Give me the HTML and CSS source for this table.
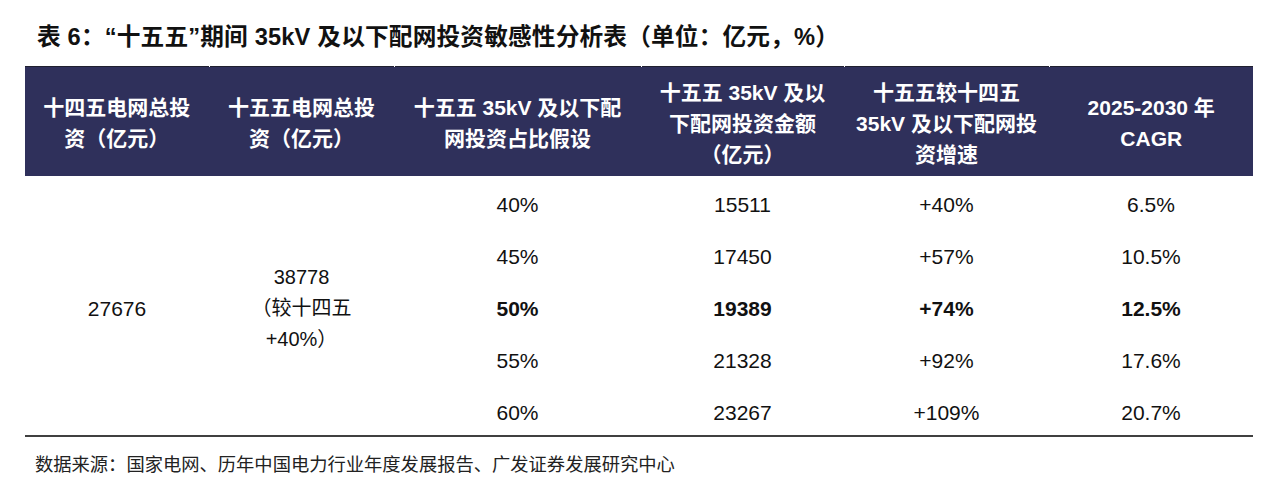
FILE: index.html
```html
<!DOCTYPE html>
<html lang="zh-CN">
<head>
<meta charset="utf-8">
<title>表6</title>
<link rel="stylesheet" href="styles.css">
</head>
<body>
<div class="page">
  <h1 class="title">表 6：“十五五”期间 35kV 及以下配网投资敏感性分析表（单位：亿元，%）</h1>
  <table class="grid">
    <colgroup>
      <col class="c1"><col class="c2"><col class="c3"><col class="c4"><col class="c5"><col class="c6">
    </colgroup>
    <thead>
      <tr>
        <th class="first">十四五电网总投<br>资（亿元）</th>
        <th>十五五电网总投<br>资（亿元）</th>
        <th>十五五 35kV 及以下配<br>网投资占比假设</th>
        <th>十五五 35kV 及以<br>下配网投资金额<br>（亿元）</th>
        <th>十五五较十四五<br>35kV 及以下配网投<br>资增速</th>
        <th>2025-2030 年<br>CAGR</th>
      </tr>
    </thead>
    <tbody>
      <tr>
        <td rowspan="5" class="merged">27676</td>
        <td rowspan="5" class="merged multi">38778<br>（较十四五<br>+40%）</td>
        <td>40%</td><td>15511</td><td>+40%</td><td>6.5%</td>
      </tr>
      <tr><td>45%</td><td>17450</td><td>+57%</td><td>10.5%</td></tr>
      <tr class="strong"><td>50%</td><td>19389</td><td>+74%</td><td>12.5%</td></tr>
      <tr><td>55%</td><td>21328</td><td>+92%</td><td>17.6%</td></tr>
      <tr class="last"><td>60%</td><td>23267</td><td>+109%</td><td>20.7%</td></tr>
    </tbody>
  </table>
  <p class="source">数据来源：国家电网、历年中国电力行业年度发展报告、广发证券发展研究中心</p>
</div>
</body>
</html>
```

FILE: styles.css
```css
html, body {
  margin: 0;
  padding: 0;
  background: #ffffff;
}

body {
  font-family: "Liberation Sans", "Noto Sans CJK SC", sans-serif;
  color: #111111;
}

.page {
  padding: 21px 35px 0 25px;
}

.title {
  margin: 0 0 13px 12px;
  font-size: 23.7px;
  line-height: 32px;
  font-weight: bold;
  letter-spacing: 0.15px;
  color: #111111;
  white-space: nowrap;
}

.grid {
  width: 1228px;
  border-collapse: collapse;
  table-layout: fixed;
}

.c1 { width: 184px; }
.c2 { width: 185px; }
.c3 { width: 247px; }
.c4 { width: 203px; }
.c5 { width: 205px; }
.c6 { width: 204px; }

.grid thead tr {
  background: #2f305b;
  border-top: 1px solid #202030;
}

.grid th {
  height: 109px;
  padding: 4px 0 0 0;
  box-sizing: border-box;
  color: #ffffff;
  font-size: 21px;
  line-height: 31px;
  font-weight: bold;
  text-align: center;
  vertical-align: middle;
  white-space: nowrap;
  border-left: 1px solid transparent;
  border-image: linear-gradient(to bottom, transparent 0, transparent 8px, #4e5079 8px, #4e5079 calc(100% - 2px), transparent calc(100% - 2px)) 1;
}

.grid th.first {
  border-left: none;
}

.grid td {
  height: 52px;
  padding: 6px 0 0 0;
  box-sizing: border-box;
  font-size: 21px;
  line-height: 31px;
  text-align: center;
  vertical-align: middle;
  color: #111111;
}

.grid td.multi {
  font-size: 20px;
}

.grid tr.strong td {
  font-weight: bold;
}

.grid tbody tr.last td,
.grid td.merged {
  border-bottom: 2px solid #404040;
}

.source {
  margin: 14px 0 0 10px;
  font-size: 18.3px;
  line-height: 28px;
  color: #222222;
  white-space: nowrap;
}
```
